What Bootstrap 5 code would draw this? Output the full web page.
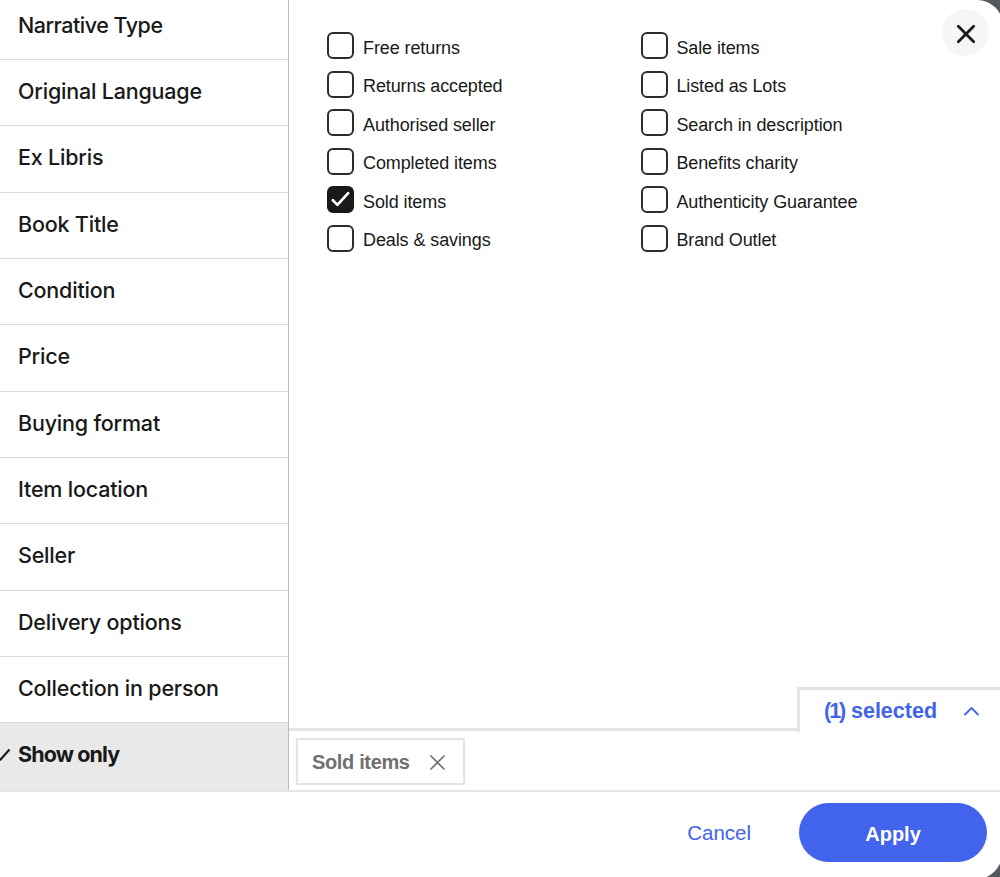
<!DOCTYPE html>
<html lang="en">
<head>
<meta charset="utf-8">
<meta name="viewport" content="width=device-width, initial-scale=1">
<title>Filters</title>
<link href="https://cdn.jsdelivr.net/npm/bootstrap@5.3.0/dist/css/bootstrap.min.css" rel="stylesheet">
<style>
  body { background: #55585d; font-family: "Liberation Sans", Arial, sans-serif; color: #191919; }
  .dialog { width: 1003px; height: 880px; border-radius: 0 26px 29px 0; padding-right: 3px; }
  .dialog-body { height: 790px; }
  .filters { width: 289px; border-right: 1.5px solid #bdbdbd; }
  .filters .list-group-item { flex: 0 0 66.33px; padding: 0 0 3px 18px; border: 0; border-bottom: 1.5px solid #dcdcdc; background: none; color: #191919; font-family: Inter, sans-serif; font-size: 21.5px; font-weight: 500; letter-spacing: -.2px; line-height: 30px; }
  .filters .list-group-item:first-child { flex-basis: 60px; padding-bottom: 10px; letter-spacing: -.5px; }
  .filters .list-group-item.current { flex: 1 1 auto; background: #e9e9e9; font-weight: 700; border-bottom-color: #d4d4d4; padding-bottom: 5px; letter-spacing: -.9px; }
  .current svg { position: absolute; left: -5px; top: 24px; }
  .options { padding: 32px 0 0 38px; }
  .options > div { width: 313.4px; }
  .options .form-check { height: 38.55px; margin: 0; padding: 0; font-size: 18px; line-height: 27px; letter-spacing: -.1px; }
  .options .form-check-input { width: 27px; height: 27px; margin: 0 9px 0 0; float: none; flex: none; border: 2px solid #2c2c2c; border-radius: 6px; }
  .options .form-check-input:checked { background-color: #191919; border-color: #191919; background-origin: border-box; background-image: url("data:image/svg+xml,%3Csvg xmlns='http://www.w3.org/2000/svg' viewBox='0 0 27 27'%3E%3Cpath d='M5.8 14.2l4.6 4.7L21.2 7.200' fill='none' stroke='white' stroke-width='2.7' stroke-linecap='round' stroke-linejoin='round'/%3E%3C/svg%3E"); background-size: 27px 27px; }
  .options label { padding-top: 2.6px; }
  .options .col-b .form-check { padding-left: .6px; }
  .options .col-b .form-check-input { margin-right: 8.4px; }
  .close-btn { position: absolute; right: 14px; top: 9px; width: 47px; height: 47px; background: #f6f6f6; border: 0; padding: 2px 0 0 1px; }
  .tab-row { height: 45px; }
  .tab-row .rule { border-bottom: 3px solid #e4e4e4; margin-bottom: 1px; }
  .tab-btn { width: 203px; border: 0 solid #e4e4e4; border-width: 3px 0 0 3px; color: #4263eb; font-weight: 700; font-size: 21.5px; padding: 0 21px 0 24px; letter-spacing: -.3px; }
  .tab-btn .count { letter-spacing: -2px; margin-right: 1px; }
  .tab-btn .picked { letter-spacing: 0; }
  .chips { height: 58px; padding: 6px 0 0 7px; }
  .chip { width: 169px; height: 47px; border: 2px solid #e4e4e4; color: #707070; font-size: 20px; font-weight: 700; padding: 0 18px 0 14px; background: #fff; letter-spacing: -.35px; }
  .chip svg { margin-top: 2px; }
  .actions { height: 87px; border-top: 2px solid #e5e5e5; padding: 0 13px 4px 0; }
  .cancel { color: #4263eb; font-size: 20.5px; margin-right: 48px; padding: 2px 0 0; }
  .apply { width: 188px; height: 59px; background: #4263eb; color: #fff; font-size: 20px; font-weight: 700; padding-top: 8px; }
</style>
</head>
<body class="overflow-hidden">
<div class="dialog bg-white overflow-hidden position-relative d-flex flex-column">
  <div class="dialog-body d-flex">
    <nav class="filters list-group list-group-flush rounded-0 flex-shrink-0">
      <a class="list-group-item d-flex align-items-center">Narrative Type</a>
      <a class="list-group-item d-flex align-items-center">Original Language</a>
      <a class="list-group-item d-flex align-items-center">Ex Libris</a>
      <a class="list-group-item d-flex align-items-center">Book Title</a>
      <a class="list-group-item d-flex align-items-center">Condition</a>
      <a class="list-group-item d-flex align-items-center">Price</a>
      <a class="list-group-item d-flex align-items-center">Buying format</a>
      <a class="list-group-item d-flex align-items-center">Item location</a>
      <a class="list-group-item d-flex align-items-center">Seller</a>
      <a class="list-group-item d-flex align-items-center">Delivery options</a>
      <a class="list-group-item d-flex align-items-center">Collection in person</a>
      <a class="list-group-item current d-flex align-items-center"><svg width="16" height="14" fill="none" stroke="#191919" stroke-width="2.2"><path d="M1 8l4.500 4.500L14.500 2.500"/></svg><span>Show only</span></a>
    </nav>
    <main class="flex-grow-1 d-flex flex-column">
      <div class="options d-flex flex-grow-1">
        <div class="col-a">
          <div class="form-check d-flex"><input class="form-check-input" type="checkbox" id="a1"><label for="a1">Free returns</label></div>
          <div class="form-check d-flex"><input class="form-check-input" type="checkbox" id="a2"><label for="a2">Returns accepted</label></div>
          <div class="form-check d-flex"><input class="form-check-input" type="checkbox" id="a3"><label for="a3">Authorised seller</label></div>
          <div class="form-check d-flex"><input class="form-check-input" type="checkbox" id="a4"><label for="a4">Completed items</label></div>
          <div class="form-check d-flex"><input class="form-check-input" type="checkbox" id="a5" checked><label for="a5">Sold items</label></div>
          <div class="form-check d-flex"><input class="form-check-input" type="checkbox" id="a6"><label for="a6">Deals &amp; savings</label></div>
        </div>
        <div class="col-b">
          <div class="form-check d-flex"><input class="form-check-input" type="checkbox" id="b1"><label for="b1">Sale items</label></div>
          <div class="form-check d-flex"><input class="form-check-input" type="checkbox" id="b2"><label for="b2">Listed as Lots</label></div>
          <div class="form-check d-flex"><input class="form-check-input" type="checkbox" id="b3"><label for="b3">Search in description</label></div>
          <div class="form-check d-flex"><input class="form-check-input" type="checkbox" id="b4"><label for="b4">Benefits charity</label></div>
          <div class="form-check d-flex"><input class="form-check-input" type="checkbox" id="b5"><label for="b5">Authenticity Guarantee</label></div>
          <div class="form-check d-flex"><input class="form-check-input" type="checkbox" id="b6"><label for="b6">Brand Outlet</label></div>
        </div>
      </div>
      <div class="tab-row d-flex">
        <div class="rule flex-grow-1"></div>
        <div class="tab-btn d-flex align-items-center justify-content-between"><span><span class="count">(1)</span> <span class="picked">selected</span></span><svg width="15" height="10" fill="none" stroke="#4263eb" stroke-width="1.8" stroke-linecap="round" stroke-linejoin="round"><path d="M1 8.500L7.500 2 14 8.500"/></svg></div>
      </div>
      <div class="chips"><button class="chip d-flex align-items-center justify-content-between"><span>Sold items</span><svg width="15" height="15" fill="none" stroke="#707070" stroke-width="1.7" stroke-linecap="round"><path d="M1 1l13 13M14 1L1 14"/></svg></button></div>
    </main>
  </div>
  <footer class="actions d-flex align-items-center justify-content-end">
    <button class="btn cancel border-0">Cancel</button>
    <button class="btn apply rounded-pill border-0">Apply</button>
  </footer>
  <button class="close-btn rounded-circle d-flex align-items-center justify-content-center" aria-label="Close"><svg width="20" height="20" fill="none" stroke="#191919" stroke-width="2.8" stroke-linecap="round"><path d="M2.300 2.300l15.400 15.400M17.700 2.300L2.300 17.700"/></svg></button>
</div>
<script src="https://cdn.jsdelivr.net/npm/bootstrap@5.3.0/dist/js/bootstrap.bundle.min.js"></script>
</body>
</html>
